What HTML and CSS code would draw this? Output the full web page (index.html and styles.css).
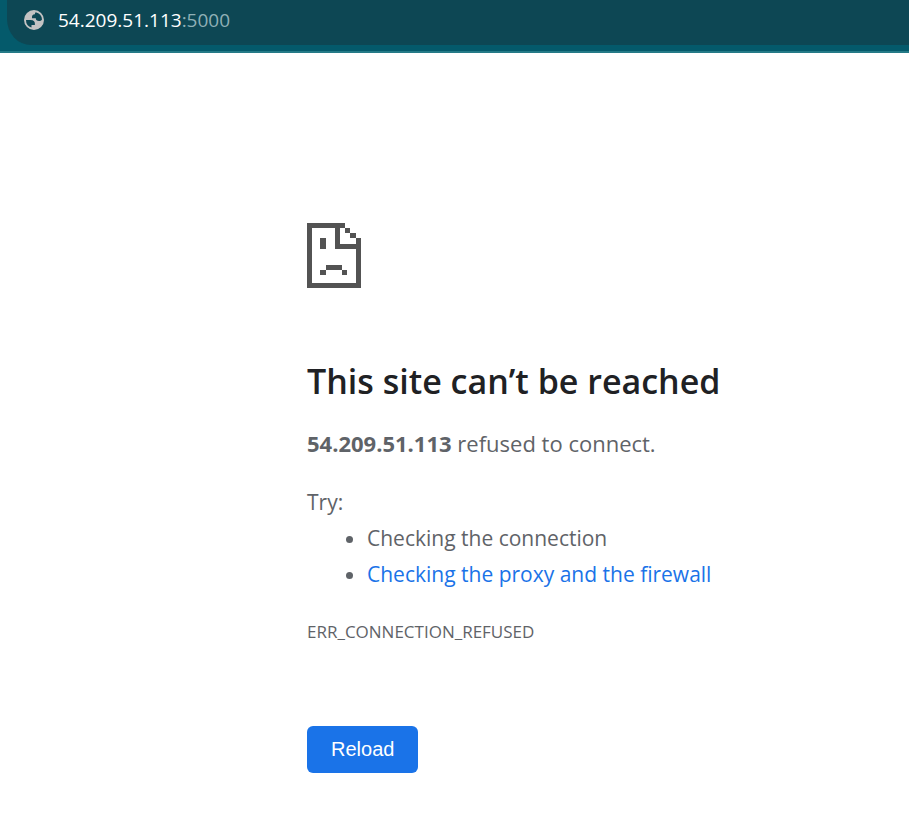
FILE: index.html
```html
<!DOCTYPE html>
<html lang="en">
<head>
<meta charset="utf-8">
<meta name="viewport" content="width=device-width, initial-scale=1">
<title>54.209.51.113</title>
<link rel="stylesheet" href="styles.css">
</head>
<body>
<header class="toolbar">
  <div class="address">
    <svg class="globe" viewBox="2 2 20 20" aria-hidden="true"><path fill-rule="evenodd" d="M12 2a10 10 0 1 0 0 20 10 10 0 0 0 0-20zM4 12h4.400c3.400 0 4.900 1.700 4.500 5.100H9.500v2.500A8 8 0 0 1 4 12zM13.700 4.200A8 8 0 0 1 20 11.500C19.300 12.500 18.300 13 17 13c-2.100 0-3.200-.9-3.200-2.750H10c-.3-2.700.7-4.100 2.900-4.100 0-1 .3-1.600.8-1.950z"/></svg>
    <span class="url">54.209.51.113<span class="port">:5000</span></span>
  </div>
</header>
<main class="error">
  <svg class="sad-page" viewBox="0 0 54 65" shape-rendering="crispEdges" aria-hidden="true"><path fill-rule="evenodd" d="M0 0H38V5H43V10H49V15H54V65H0ZM5 5V60H49V26H28V5ZM33 5V21H49V15H43V10H38V5ZM13 15H19V26H13ZM19 42H35V47H40V52H35V47H19V52H13V47H19Z"/></svg>
  <h1>This site can’t be reached</h1>
  <p class="summary"><strong>54.209.51.113</strong> refused to connect.</p>
  <div class="suggestions">
    <p>Try:</p>
    <ul>
      <li>Checking the connection</li>
      <li><a href="#proxy">Checking the proxy and the firewall</a></li>
    </ul>
  </div>
  <p class="code">ERR_CONNECTION_REFUSED</p>
  <button class="reload" type="button">Reload</button>
</main>
</body>
</html>
```
FILE: styles.css
```css
body {
  margin: 0;
  background: #fff;
  color: #5f6368;
  font-family: "Segoe UI", "Open Sans", "Noto Sans", sans-serif;
  font-size: 21px;
  line-height: 36px;
}

.toolbar {
  padding: 0 0 6px 7px;
  background: #045a6b;
  border-bottom: 2px solid #257a87;
}

.address {
  display: flex;
  align-items: center;
  gap: 14px;
  height: 40px;
  padding: 0 17px 5px;
  border-radius: 0 0 0 24px / 0 0 0 26px;
  background: #0d4754;
}

.globe {
  width: 20px;
  height: 20px;
  fill: #c3c3c3;
}

.url {
  color: #fff;
  font-size: 19px;
}

.port {
  color: #8fb0b6;
}

.error {
  max-width: 540px;
  margin: 170px 62px 0 307px;
}

.sad-page {
  display: block;
  width: 54px;
  height: 65px;
  fill: #535353;
}

h1 {
  margin: 68px 0 19px;
  color: #202124;
  font-size: 34px;
  font-weight: 600;
  line-height: 50px;
}

p,
ul {
  margin: 0;
}

ul {
  padding-left: 60px;
}

.summary {
  margin-bottom: 23px;
  font-size: 22px;
}

a {
  color: #1a73e8;
  text-decoration: none;
}

.code {
  margin: 22px 0 76px;
  font-size: 17px;
}

.reload {
  padding: 0 24px;
  border: 0;
  border-radius: 6px;
  background: #1a73e8;
  color: #fff;
  font-family: "Liberation Sans", Arial, sans-serif;
  font-size: 20px;
  line-height: 47px;
}
```
